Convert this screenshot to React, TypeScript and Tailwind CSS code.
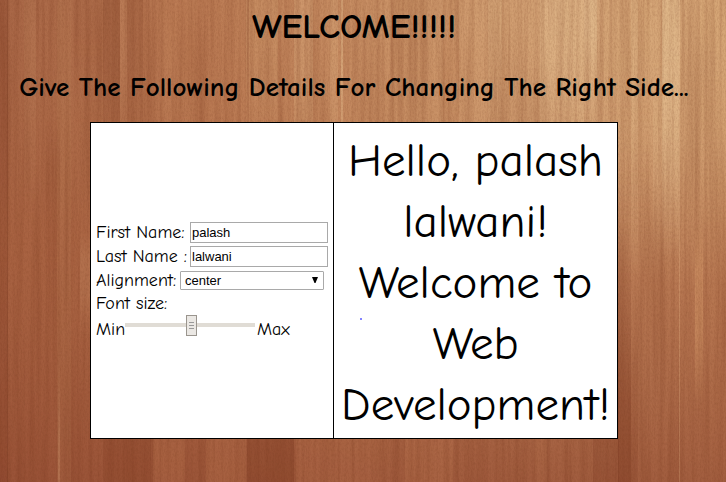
import { useState } from "react";

// Board seams: x, y, width, height, colour, opacity
const boards: [number, number, number, number, string, number][] = [
  [0, 0, 7, 482, "#6d2d17", 0.16],
  [7, 0, 1, 482, "#5f2512", 0.26],
  [24, 0, 12, 235, "#d09a70", 0.16],
  [46, 120, 14, 200, "#7b3820", 0.12],
  [57, 0, 14, 482, "#d09a70", 0.1],
  [80, 230, 12, 110, "#d09a70", 0.22],
  [74, 0, 28, 130, "#7b3820", 0.06],
  [103, 0, 17, 240, "#6d2d17", 0.2],
  [120, 0, 7, 240, "#e0ab80", 0.14],
  [127, 0, 16, 240, "#6d2d17", 0.14],
  [58, 340, 2, 142, "#e0ab80", 0.25],
  [160, 0, 37, 240, "#d99f70", 0.12],
  [246, 0, 32, 150, "#dcb07d", 0.24],
  [247, 0, 2, 240, "#7b3820", 0.2],
  [294, 0, 19, 240, "#e4b989", 0.3],
  [330, 0, 8, 240, "#e4b989", 0.26],
  [341, 0, 2, 240, "#efcb9b", 0.4],
  [391, 0, 36, 110, "#8f4f2f", 0.12],
  [443, 0, 16, 240, "#a9663f", 0.16],
  [488, 0, 14, 150, "#eac797", 0.18],
  [540, 0, 44, 170, "#ebcb9d", 0.3],
  [584, 0, 13, 130, "#f1d5a8", 0.3],
  [600, 0, 50, 240, "#b87848", 0.1],
  [662, 0, 18, 260, "#f1d5a8", 0.34],
  [631, 0, 7, 280, "#efcb9b", 0.28],
  [653, 60, 26, 200, "#efcb9b", 0.16],
  [679, 0, 1, 482, "#e9b98a", 0.3],
  [695, 225, 8, 180, "#dda270", 0.36],
  [618, 220, 13, 262, "#7b3820", 0.42],
  [631, 340, 7, 142, "#7b3820", 0.2],
  [700, 0, 26, 240, "#e7bd8b", 0.12],
  [103, 300, 48, 182, "#7b3820", 0.2],
  [153, 300, 32, 182, "#d08a60", 0.18],
  [206, 300, 40, 182, "#d08a60", 0.18],
  [247, 300, 47, 182, "#6d2d17", 0.22],
  [296, 300, 94, 182, "#d08a60", 0.14],
  [405, 300, 48, 182, "#d08a60", 0.16],
  [535, 300, 12, 182, "#d08a60", 0.12],
  [593, 300, 26, 182, "#6d2d17", 0.2],
];

function boardMask(y: number, h: number) {
  const atTop = y === 0;
  const atBottom = y + h === 482;
  if (atTop && atBottom) return undefined;
  if (atTop) return "url(#fade-down)";
  if (atBottom) return "url(#fade-up)";
  return "url(#fade-both)";
}

function Wood() {
  return (
    <svg
      aria-hidden="true"
      className="absolute inset-0 -z-10 h-full w-full"
      viewBox="0 0 726 482"
      preserveAspectRatio="none"
    >
      <defs>
        <linearGradient id="tone" x1="0" y1="0" x2="1" y2="0">
          <stop offset="0" stopColor="#a86646" />
          <stop offset="0.28" stopColor="#bb7b54" />
          <stop offset="0.55" stopColor="#cb9468" />
          <stop offset="0.83" stopColor="#d8aa7c" />
          <stop offset="1" stopColor="#d3a273" />
        </linearGradient>
        <linearGradient id="shade" x1="0.1" y1="0" x2="0" y2="1">
          <stop offset="0" stopColor="#a25a38" stopOpacity="0" />
          <stop offset="0.2" stopColor="#a8623f" stopOpacity="0.12" />
          <stop offset="0.5" stopColor="#a8603f" stopOpacity="0.65" />
          <stop offset="1" stopColor="#985136" stopOpacity="0.92" />
        </linearGradient>
        <linearGradient id="down" x1="0" y1="0" x2="0" y2="1">
          <stop offset="0.3" stopColor="#fff" />
          <stop offset="1" stopColor="#000" />
        </linearGradient>
        <linearGradient id="up" x1="0" y1="1" x2="0" y2="0">
          <stop offset="0.3" stopColor="#fff" />
          <stop offset="1" stopColor="#000" />
        </linearGradient>
        <linearGradient id="both" x1="0" y1="0" x2="0" y2="1">
          <stop offset="0" stopColor="#000" />
          <stop offset="0.25" stopColor="#fff" />
          <stop offset="0.6" stopColor="#fff" />
          <stop offset="1" stopColor="#000" />
        </linearGradient>
        <mask id="fade-down" maskContentUnits="objectBoundingBox">
          <rect width="1" height="1" fill="url(#down)" />
        </mask>
        <mask id="fade-up" maskContentUnits="objectBoundingBox">
          <rect width="1" height="1" fill="url(#up)" />
        </mask>
        <mask id="fade-both" maskContentUnits="objectBoundingBox">
          <rect width="1" height="1" fill="url(#both)" />
        </mask>
        <filter id="grain" x="0" y="0" width="100%" height="100%" colorInterpolationFilters="sRGB">
          <feTurbulence type="fractalNoise" baseFrequency="0.2 0.005" numOctaves="3" seed="8" />
          <feColorMatrix values="0 0 0 0 0.45  0 0 0 0 0.2  0 0 0 0 0.1  1.4 0 0 0 -0.5" />
        </filter>
        <filter id="speckle" x="0" y="0" width="100%" height="100%" colorInterpolationFilters="sRGB">
          <feTurbulence type="fractalNoise" baseFrequency="0.7 0.35" numOctaves="2" seed="3" />
          <feColorMatrix values="0 0 0 0 0.4  0 0 0 0 0.18  0 0 0 0 0.08  1 0 0 0 -0.38" />
        </filter>
      </defs>
      <rect width="726" height="482" fill="url(#tone)" />
      <rect width="726" height="482" fill="url(#shade)" />
      {boards.map(([x, y, w, h, fill, opacity], i) => (
        <rect key={i} x={x} y={y} width={w} height={h} fill={fill} opacity={opacity} mask={boardMask(y, h)} />
      ))}
      <rect width="726" height="482" filter="url(#grain)" opacity="0.32" />
      <rect width="726" height="482" filter="url(#speckle)" opacity="0.3" />
    </svg>
  );
}

export default function App() {
  const [first, setFirst] = useState("palash");
  const [last, setLast] = useState("lalwani");
  const [align, setAlign] = useState("center");
  const [size, setSize] = useState(47);

  const field =
    "h-[21px] w-[138px] shrink-0 border border-[#a9a9a9] bg-white px-px font-['Liberation_Sans',Arial,sans-serif] text-[13px] outline-none";

  return (
    <div className="relative isolate flex min-h-screen flex-col items-center pr-[18px] font-['Comic_Sans_MS','Comic_Neue','Open_Sans',sans-serif] text-black">
      <Wood />
      <h1 className="mt-1 text-[35px] leading-[45px] font-bold">WELCOME!!!!!</h1>
      <h2 className="mt-[22px] text-center text-[27px] leading-[34px] font-bold whitespace-nowrap">
        Give The Following Details For Changing The Right Side...
      </h2>
      <main className="mt-[17px] flex w-[528px] max-w-full border border-black bg-white">
        <form className="flex w-[243px] shrink-0 flex-col justify-center border-r border-black px-[5px] pt-1.5 text-[18px] leading-[22px]">
          <div className="flex h-6 items-center justify-between">
            <label htmlFor="first">First Name:</label>
            <input id="first" className={field} value={first} onChange={(e) => setFirst(e.target.value)} />
          </div>
          <div className="flex h-6 items-center justify-between">
            <label htmlFor="last">Last Name :</label>
            <input id="last" className={field} value={last} onChange={(e) => setLast(e.target.value)} />
          </div>
          <div className="flex h-6 items-center justify-between pr-1">
            <label htmlFor="align">Alignment:</label>
            <div className="relative">
              <select
                id="align"
                className="block h-[19px] w-[144px] appearance-none rounded-[1px] border border-[#a9a9a9] bg-white pl-1 font-['Liberation_Sans',Arial,sans-serif] text-[13px] leading-[17px] outline-none"
                value={align}
                onChange={(e) => setAlign(e.target.value)}
              >
                <option>left</option>
                <option>center</option>
                <option>right</option>
              </select>
              <svg aria-hidden="true" className="pointer-events-none absolute top-1.5 right-1.5 h-1.5 w-1.5" viewBox="0 0 6 6">
                <path d="M0 0h6L3.5 6h-1z" />
              </svg>
            </div>
          </div>
          <label htmlFor="size">Font size:</label>
          <div className="flex h-8 items-start">
            <span className="w-[29px] pt-1">Min</span>
            <input
              id="size"
              type="range"
              min={8}
              max={84}
              value={size}
              onChange={(e) => setSize(Number(e.target.value))}
              className="mr-0.5 h-[21px] w-[130px] appearance-none bg-transparent bg-[linear-gradient(#e0dcd5,#e0dcd5)] bg-[length:100%_4px] bg-center bg-no-repeat outline-none [&::-webkit-slider-thumb]:h-[21px] [&::-webkit-slider-thumb]:w-[11px] [&::-webkit-slider-thumb]:appearance-none [&::-webkit-slider-thumb]:border [&::-webkit-slider-thumb]:border-[#9a958e] [&::-webkit-slider-thumb]:bg-[#ebe8e4] [&::-webkit-slider-thumb]:bg-[repeating-linear-gradient(#999_0_1px,transparent_1px_3px)] [&::-webkit-slider-thumb]:bg-[length:5px_7px] [&::-webkit-slider-thumb]:bg-center [&::-webkit-slider-thumb]:bg-no-repeat"
            />
            <span className="pt-1">Max</span>
          </div>
        </form>
        <section className="relative min-w-0 flex-1 px-1.5 pt-2 pb-0.5">
          <p className="leading-[61px]" style={{ fontSize: size, textAlign: align as "left" | "center" | "right" }}>
            {`Hello, ${first} ${last}! Welcome to Web Development!`}
          </p>
          <span className="absolute top-[195px] left-[26px] h-0.5 w-0.5 rounded-full bg-[#5a5aff]" />
        </section>
      </main>
    </div>
  );
}
